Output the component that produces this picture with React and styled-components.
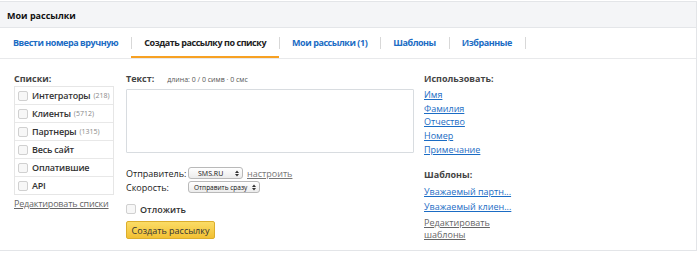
import styled, { createGlobalStyle } from "styled-components";

const GlobalStyle = createGlobalStyle`
  body {
    margin: 0;
    background: #ffffff;
    font-family: "Open Sans", "Liberation Sans", sans-serif;
    color: #333;
  }
`;

const lists = [
  { name: "Интеграторы", count: 218 },
  { name: "Клиенты", count: 5712 },
  { name: "Партнеры", count: 1315 },
  { name: "Весь сайт" },
  { name: "Оплатившие" },
  { name: "API" },
];

const fields = ["Имя", "Фамилия", "Отчество", "Номер", "Примечание"];
const templates = ["Уважаемый партн...", "Уважаемый клиен..."];

const tabs = [
  { label: "Ввести номера вручную" },
  { label: "Создать рассылку по списку", active: true },
  { label: "Мои рассылки (1)" },
  { label: "Шаблоны" },
  { label: "Избранные" },
];

const Arrows = () => (
  <svg width="4" height="7" viewBox="0 0 4 7">
    <path d="M0 3 L2 0.5 L4 3 Z M0 4 L2 6.5 L4 4 Z" fill="#333" />
  </svg>
);

const App = () => {
  return (
    <>
      <GlobalStyle />
      <Panel>
        <Header>Мои рассылки</Header>
        <Tabs>
          {tabs.map((t) => (
            <Tab key={t.label} $active={t.active}>
              {t.label}
            </Tab>
          ))}
        </Tabs>
        <Content>
          <LeftCol>
            <Title>Списки:</Title>
            <ListBox>
              {lists.map((l) => (
                <ListRow key={l.name}>
                  <Check />
                  <span>{l.name}</span>
                  {l.count && <Count>({l.count})</Count>}
                </ListRow>
              ))}
            </ListBox>
            <EditLink>Редактировать списки</EditLink>
          </LeftCol>

          <MiddleCol>
            <TextHead>
              <Title>Текст:</Title>
              <Hint>длина: 0 / 0 симв · 0 смс</Hint>
            </TextHead>
            <TextArea />
            <FormRows>
              <FormRow>
                <Label>Отправитель:</Label>
                <Select $width={55}>
                  SMS.RU
                  <Arrows />
                </Select>
                <SetupLink>настроить</SetupLink>
              </FormRow>
              <FormRow>
                <Label>Скорость:</Label>
                <Select $width={72} $small>
                  Отправить сразу
                  <Arrows />
                </Select>
              </FormRow>
            </FormRows>
            <DelayRow>
              <Check />
              <span>Отложить</span>
            </DelayRow>
            <Button>Создать рассылку</Button>
          </MiddleCol>

          <RightCol>
            <Title>Использовать:</Title>
            <FieldList>
              {fields.map((f) => (
                <FieldLink key={f}>{f}</FieldLink>
              ))}
            </FieldList>
            <Title $top={12}>Шаблоны:</Title>
            <TemplateList>
              {templates.map((t) => (
                <TemplateLink key={t}>{t}</TemplateLink>
              ))}
            </TemplateList>
            <EditTemplates>Редактировать шаблоны</EditTemplates>
          </RightCol>
        </Content>
      </Panel>
    </>
  );
};

const Panel = styled.div`
  margin-top: 1px;
  width: 697px;
  height: 250px;
  box-sizing: border-box;
  border: 1px solid #e3e5e8;
  border-left: none;
  background: #fff;
`;

const Header = styled.div`
  height: 26px;
  box-sizing: border-box;
  background: #f4f5f7;
  border-bottom: 1px solid #e4e6e9;
  padding-left: 7px;
  font-size: 9px;
  font-weight: 700;
  color: #111;
  line-height: 27px;
`;

const Tabs = styled.div`
  display: flex;
  height: 31px;
  box-sizing: border-box;
  border-bottom: 1px solid #e8e9eb;
`;

const Tab = styled.div`
  position: relative;
  padding: 0 13px;
  font-size: 9px;
  font-weight: 700;
  letter-spacing: -0.45px;
  line-height: 30px;
  color: ${(p) => (p.$active ? "#222" : "#1b6cc4")};
  border-bottom: 2px solid ${(p) => (p.$active ? "#f7a123" : "transparent")};

  &::after {
    content: "";
    position: absolute;
    right: -1px;
    top: 9px;
    height: 12px;
    border-right: 1px solid #d8d8d8;
  }
`;

const Content = styled.div`
  display: flex;
  padding: 14px 0 0 14px;
`;

const Title = styled.div`
  font-size: 9px;
  font-weight: 700;
  color: #444;
  line-height: 12px;
  margin-top: ${(p) => p.$top || 0}px;
`;

const LeftCol = styled.div`
  width: 100px;
  margin-right: 12px;
`;

const ListBox = styled.div`
  margin-top: 1px;
  border: 1px solid #e6e6e6;
`;

const ListRow = styled.div`
  display: flex;
  align-items: center;
  height: 17px;
  padding-left: 3px;
  font-size: 9px;
  font-weight: 600;
  letter-spacing: -0.2px;
  color: #333;
  & + & {
    border-top: 1px solid #e8e8e8;
  }
`;

const Check = styled.span`
  display: inline-block;
  width: 8px;
  height: 8px;
  border: 1px solid #d0d0d0;
  border-radius: 2px;
  background: #f7f7f7;
  margin-right: 4px;
  flex-shrink: 0;
`;

const Count = styled.span`
  margin-left: 3px;
  font-size: 7px;
  font-weight: 400;
  letter-spacing: 0;
  color: #888;
`;

const EditLink = styled.div`
  margin-top: 3px;
  font-size: 9px;
  letter-spacing: -0.2px;
  line-height: 12px;
  color: #666;
  text-decoration: underline;
`;

const MiddleCol = styled.div`
  width: 288px;
  margin-right: 10px;
`;

const TextHead = styled.div`
  display: flex;
  align-items: baseline;
`;

const Hint = styled.span`
  margin-left: 13px;
  font-size: 7px;
  color: #555;
`;

const TextArea = styled.div`
  margin-top: 4px;
  height: 64px;
  box-sizing: border-box;
  border: 1px solid #d8dce0;
  border-radius: 1px;
`;

const FormRows = styled.div`
  margin-top: 13px;
`;

const FormRow = styled.div`
  display: flex;
  align-items: center;
  height: 14px;
`;

const Label = styled.span`
  width: 62px;
  font-size: 9px;
  color: #222;
`;

const Select = styled.div`
  display: flex;
  align-items: center;
  justify-content: space-between;
  width: ${(p) => p.$width}px;
  height: 12px;
  box-sizing: border-box;
  padding: 0 3px 0 ${(p) => (p.$small ? 5 : 9)}px;
  border: 1px solid #b9b9b9;
  border-radius: 3px;
  background: linear-gradient(#fff, #ececec);
  font-size: ${(p) => (p.$small ? 6.5 : 7)}px;
  color: #111;
`;

const SetupLink = styled.span`
  margin-left: 4px;
  font-size: 9px;
  color: #777;
  text-decoration: underline;
`;

const DelayRow = styled.div`
  display: flex;
  align-items: center;
  margin-top: 8px;
  height: 14px;
  font-size: 9px;
  font-weight: 600;
  color: #333;
`;

const Button = styled.button`
  display: block;
  margin-top: 5px;
  width: 89px;
  height: 18px;
  padding: 0;
  border: 1px solid #dcae2c;
  border-radius: 2px;
  background: linear-gradient(#fbdc66, #f2c033);
  font-family: inherit;
  font-size: 9px;
  color: #333;
`;

const RightCol = styled.div`
  width: 90px;
`;

const FieldList = styled.div`
  margin-top: 3px;
  display: flex;
  flex-direction: column;
  align-items: flex-start;
`;

const FieldLink = styled.span`
  font-size: 9px;
  line-height: 13.7px;
  color: #1b6cc4;
  text-decoration: underline;
`;

const TemplateList = styled.div`
  margin-top: 3px;
  display: flex;
  flex-direction: column;
  align-items: flex-start;
`;

const TemplateLink = styled.span`
  font-size: 9px;
  line-height: 15px;
  color: #1b6cc4;
  text-decoration: underline;
  white-space: nowrap;
`;

const EditTemplates = styled.div`
  margin-top: 3px;
  width: 70px;
  font-size: 9px;
  line-height: 12px;
  color: #666;
  text-decoration: underline;
`;

export default App;
